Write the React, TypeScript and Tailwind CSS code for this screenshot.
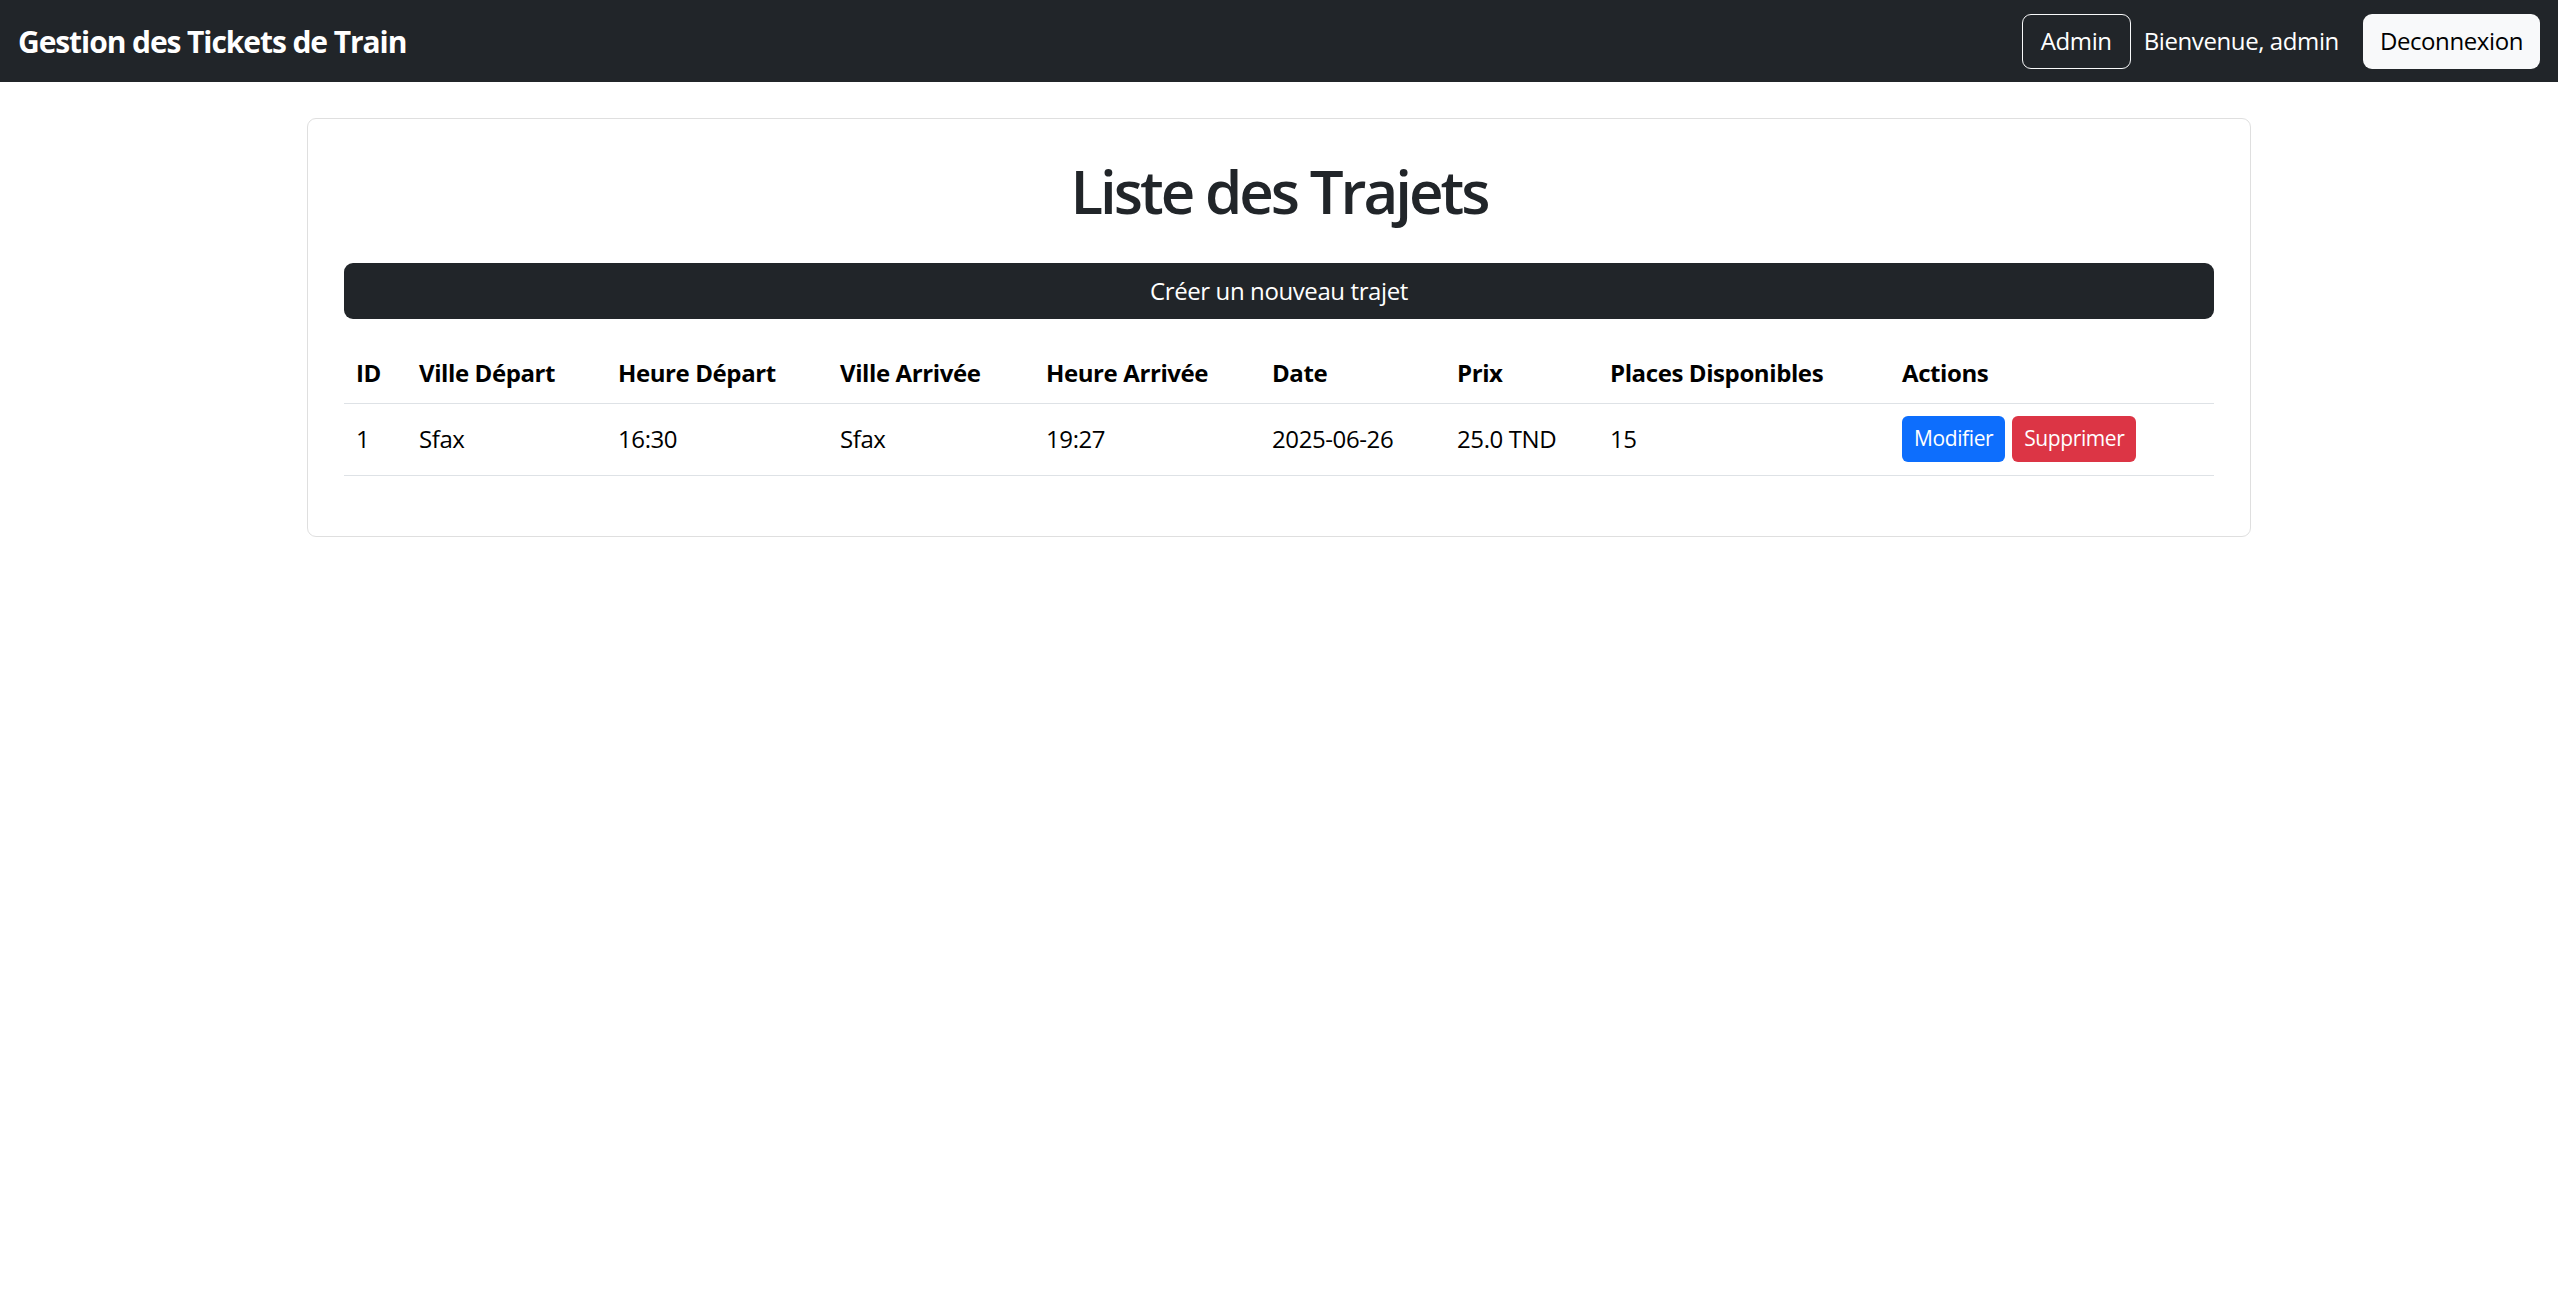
const trajets = [
  {
    id: 1,
    villeDepart: "Sfax",
    heureDepart: "16:30",
    villeArrivee: "Sfax",
    heureArrivee: "19:27",
    date: "2025-06-26",
    prix: "25.0 TND",
    places: 15,
  },
];

const columns = [
  { label: "ID", width: "w-[63px]" },
  { label: "Ville Départ", width: "w-[199px]" },
  { label: "Heure Départ", width: "w-[222px]" },
  { label: "Ville Arrivée", width: "w-[206px]" },
  { label: "Heure Arrivée", width: "w-[226px]" },
  { label: "Date", width: "w-[185px]" },
  { label: "Prix", width: "w-[153px]" },
  { label: "Places Disponibles", width: "w-[292px]" },
  { label: "Actions", width: "w-[324px]" },
];

function Navbar() {
  return (
    <nav className="flex h-[82px] items-center justify-between bg-[#212529] px-[18px]">
      <a href="#" className="text-[30px] font-bold tracking-[-0.036em] text-white">
        Gestion des Tickets de Train
      </a>
      <div className="flex items-center">
        <button className="h-[55px] rounded-[9px] border border-[#f8f9fa] px-[18px] text-[24px] text-white">
          Admin
        </button>
        <span className="ml-[13px] mr-[24px] text-[24px] text-white">Bienvenue, admin</span>
        <button className="h-[55px] rounded-[9px] bg-[#f8f9fa] px-[17px] text-[24px] text-black">
          Deconnexion
        </button>
      </div>
    </nav>
  );
}

export default function App() {
  return (
    <div className="min-h-screen bg-white font-['Open_Sans',sans-serif] tracking-[-0.025em] text-[#212529]">
      <Navbar />
      <div className="mx-auto mt-[36px] w-[1980px] px-[18px]">
        <div className="rounded-[9px] border border-[#dfdfdf] p-[36px]">
          <h1 className="mb-[36px] text-center text-[60px] font-semibold leading-[1.2] tracking-[-0.05em]">
            Liste des Trajets
          </h1>
          <button className="mb-[24px] h-[56px] w-full rounded-[9px] bg-[#212529] text-[24px] text-white">
            Créer un nouveau trajet
          </button>
          <table className="mb-[24px] w-full table-fixed border-collapse text-[24px] text-black">
            <thead>
              <tr className="h-[60px] border-b border-[#dee2e6]">
                {columns.map((c) => (
                  <th key={c.label} className={`${c.width} px-[12px] text-left align-middle font-bold`}>
                    {c.label}
                  </th>
                ))}
              </tr>
            </thead>
            <tbody>
              {trajets.map((t) => (
                <tr key={t.id} className="h-[72px] border-b border-[#dee2e6]">
                  <td className="px-[12px] align-middle">{t.id}</td>
                  <td className="px-[12px] align-middle">{t.villeDepart}</td>
                  <td className="px-[12px] align-middle">{t.heureDepart}</td>
                  <td className="px-[12px] align-middle">{t.villeArrivee}</td>
                  <td className="px-[12px] align-middle">{t.heureArrivee}</td>
                  <td className="px-[12px] align-middle">{t.date}</td>
                  <td className="px-[12px] align-middle">{t.prix}</td>
                  <td className="px-[12px] align-middle">{t.places}</td>
                  <td className="px-[12px] align-middle">
                    <div className="flex items-center gap-[7px]">
                      <button className="h-[46px] rounded-[6px] bg-[#0d6efd] px-[12px] text-[21px] text-white">
                        Modifier
                      </button>
                      <button className="h-[46px] rounded-[6px] bg-[#dc3545] px-[12px] text-[21px] text-white">
                        Supprimer
                      </button>
                    </div>
                  </td>
                </tr>
              ))}
            </tbody>
          </table>
        </div>
      </div>
    </div>
  );
}
